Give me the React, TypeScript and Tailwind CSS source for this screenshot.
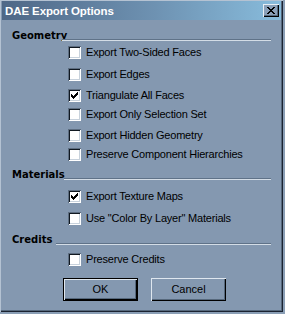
import React from "react";

const LABEL = { fontFamily: '"Liberation Sans", Arial, sans-serif' } as const;
const HEAD = { fontFamily: '"DejaVu Sans", Verdana, sans-serif' } as const;

function Check() {
  return (
    <svg width="7" height="7" viewBox="0 0 7 7" shapeRendering="crispEdges" className="block">
      <path
        d="M6 0h1v3h-1zM5 1h1v3h-1zM4 2h1v3h-1zM0 2h1v3h-1zM1 3h1v3h-1zM2 4h1v3h-1zM3 3h1v3h-1z"
        fill="#000"
      />
    </svg>
  );
}

function Box({ checked }: { checked?: boolean }) {
  return (
    <div className="w-[13px] h-[13px] shrink-0 bg-white flex items-center justify-center shadow-[inset_1px_1px_0_#5d6d80,inset_-1px_-1px_0_#ffffff,inset_2px_2px_0_#101820,inset_-2px_-2px_0_#c8d2dc]">
      {checked ? <Check /> : null}
    </div>
  );
}

function Row({ label, checked, mt }: { label: string; checked?: boolean; mt: string }) {
  return (
    <div className={`flex items-center h-[13px] pl-[66px] ${mt}`}>
      <Box checked={checked} />
      <span className="ml-[5px] text-[11px] leading-[13px] text-black tracking-[-0.2px] whitespace-nowrap" style={LABEL}>
        {label}
      </span>
    </div>
  );
}

function Header({ title, mt, lineMl }: { title: string; mt: string; lineMl: string }) {
  return (
    <div className={`flex h-[12px] pl-[10px] pr-[10px] ${mt}`}>
      <span className="text-[10px] leading-[12px] font-bold text-black whitespace-nowrap" style={HEAD}>
        {title}
      </span>
      <div className={`flex-1 mt-[9px] h-[2px] border-t border-t-[#5f7288] border-b border-b-[#d4dde6] ${lineMl}`} />
    </div>
  );
}

export default function App() {
  return (
    <div className="w-[285px] h-[314px] bg-[#8a9eb5]">
      <div className="w-[283px] h-[312px] bg-[#8498b0] pt-[1px] px-[2px] shadow-[inset_1px_1px_0_#b4c2d2,inset_-1px_-1px_0_#1a2230,inset_-2px_-2px_0_#56687c]">
        <div className="h-[19px] flex items-center justify-between pl-[3px] pr-[2px] bg-[linear-gradient(to_right,#4f6887,#6e92b2_55%,#88bcdc)]">
          <span
            className="text-white font-bold text-[11.5px] leading-[14px] tracking-[-0.1px] whitespace-nowrap"
            style={LABEL}
          >
            DAE Export Options
          </span>
          <div className="w-[16px] h-[13px] bg-[#8a9fb7] flex items-center justify-center shadow-[inset_1px_1px_0_#e8eef4,inset_-1px_-1px_0_#000000,inset_-2px_-2px_0_#56687c]">
            <svg width="8" height="7" viewBox="0 0 8 7" shapeRendering="crispEdges" className="block">
              <path
                d="M0 0h2v1h-2zM6 0h2v1h-2zM1 1h2v1h-2zM5 1h2v1h-2zM2 2h4v1h-4zM3 3h2v1h-2zM2 4h4v1h-4zM1 5h2v1h-2zM5 5h2v1h-2zM0 6h2v1h-2zM6 6h2v1h-2z"
                fill="#000"
              />
            </svg>
          </div>
        </div>

        <Header title="Geometry" mt="mt-[10px]" lineMl="ml-[-5px]" />
        <Row label="Export Two-Sided Faces" mt="mt-[4px]" />
        <Row label="Export Edges" mt="mt-[9px]" />
        <Row label="Triangulate All Faces" checked mt="mt-[8px]" />
        <Row label="Export Only Selection Set" mt="mt-[6px]" />
        <Row label="Export Hidden Geometry" mt="mt-[8px]" />
        <Row label="Preserve Component Hierarchies" mt="mt-[6px]" />

        <Header title="Materials" mt="mt-[8px]" lineMl="ml-[-1px]" />
        <Row label="Export Texture Maps" checked mt="mt-[9px]" />
        <Row label={'Use "Color By Layer" Materials'} mt="mt-[9px]" />

        <Header title="Credits" mt="mt-[9px]" lineMl="ml-[4px]" />
        <Row label="Preserve Credits" mt="mt-[7px]" />

        <div className="flex pl-[61px] mt-[12px] gap-[13px]">
          <button
            className="w-[75px] h-[23px] bg-[#8498b0] text-[11px] text-black border border-black shadow-[inset_1px_1px_0_#dfe7ef,inset_-1px_-1px_0_#000000,inset_-2px_-2px_0_#56687c]"
            style={LABEL}
          >
            OK
          </button>
          <button
            className="w-[75px] h-[23px] bg-[#8498b0] text-[11px] text-black shadow-[inset_1px_1px_0_#dfe7ef,inset_-1px_-1px_0_#000000,inset_-2px_-2px_0_#56687c]"
            style={LABEL}
          >
            Cancel
          </button>
        </div>
      </div>
    </div>
  );
}
